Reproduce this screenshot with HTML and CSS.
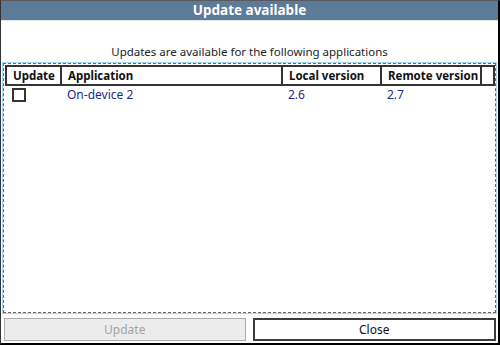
FILE: index.html
```html
<!DOCTYPE html>
<html lang="en">
<head>
    <meta charset="UTF-8">
    <meta name="viewport" content="width=device-width, initial-scale=1.0">
    <title>Update available</title>
    <link rel="stylesheet" href="styles.css">
</head>
<body>

<div class="window">
    <div class="titleBar">Update available</div>

    <div class="message">Updates are available for the following applications</div>

    <div class="listFrame">
        <div class="listFocus">
            <table class="appTable">
                <colgroup>
                    <col class="colUpdate">
                    <col class="colApp">
                    <col class="colLocal">
                    <col class="colRemote">
                    <col class="colFill">
                </colgroup>
                <thead>
                    <tr>
                        <th>Update</th>
                        <th>Application</th>
                        <th>Local version</th>
                        <th>Remote version</th>
                        <th></th>
                    </tr>
                </thead>
                <tbody>
                    <tr>
                        <td><span class="checkBox"></span></td>
                        <td>On-device 2</td>
                        <td>2.6</td>
                        <td>2.7</td>
                        <td></td>
                    </tr>
                </tbody>
            </table>
        </div>
    </div>

    <div class="buttonRow">
        <button class="btn btnDisabled" disabled>Update</button>
        <button class="btn btnDefault">Close</button>
    </div>
</div>

</body>
</html>
```

FILE: styles.css
```css
html, body {
    margin: 0;
    padding: 0;
    background-color: #fff;
}

body {
    font-family: "Noto Sans", "Open Sans", sans-serif;
    font-size: 12px;
    color: #222;
}

.window {
    width: 500px;
    height: 345px;
    box-sizing: border-box;
    border-top: 1px solid #5a5a5a;
    border-left: 1px solid #333;
    border-right: 2px solid #000;
    border-bottom: 2px solid #000;
    display: flex;
    flex-direction: column;
}

.titleBar {
    height: 19px;
    line-height: 19px;
    background-color: #5b7b99;
    border-bottom: 1px solid #dfe7ef;
    color: #fff;
    font-weight: bold;
    font-size: 13.5px;
    text-align: center;
}

.message {
    height: 41px;
    box-sizing: border-box;
    padding-top: 23px;
    line-height: 16px;
    text-align: center;
    font-size: 11.5px;
    color: #222;
}

.listFrame {
    flex: 1;
    margin: 0 1px;
    border: 1px solid #a6d8ee;
    display: flex;
    min-width: 0;
}

.listFocus {
    flex: 1;
    border: 1px dashed #666;
    padding: 1px 0 0 1px;
    min-width: 0;
    overflow: hidden;
}

.appTable {
    border-collapse: collapse;
    table-layout: fixed;
    width: 488px;
}

.colUpdate { width: 55px; }
.colApp { width: 221px; }
.colLocal { width: 99px; }
.colRemote { width: 100px; }
.colFill { width: 13px; }

.appTable th {
    height: 17px;
    padding: 0 0 0 6px;
    border: 2px solid #333;
    text-align: left;
    font-weight: bold;
    font-size: 11.5px;
    color: #111;
    line-height: 15px;
    white-space: nowrap;
    overflow: hidden;
}

.appTable td {
    height: 18px;
    padding: 0 0 0 6px;
    color: #1c2a8c;
    font-size: 12px;
    line-height: 18px;
    white-space: nowrap;
}

.checkBox {
    display: block;
    width: 10px;
    height: 10px;
    border: 2px solid #333;
    background-color: #fff;
}

.buttonRow {
    display: flex;
    gap: 7px;
    padding: 4px 2px 2px 3px;
}

.btn {
    flex: 1;
    height: 23px;
    font-family: "Noto Sans", "Open Sans", sans-serif;
    font-size: 12px;
    padding: 0;
    margin: 0;
}

.btnDisabled {
    background-color: #ececec;
    border: 1px solid #adadad;
    color: #a2a2a2;
}

.btnDefault {
    background-color: #fff;
    border: 2px solid #3c3c3c;
    color: #111;
}
```
